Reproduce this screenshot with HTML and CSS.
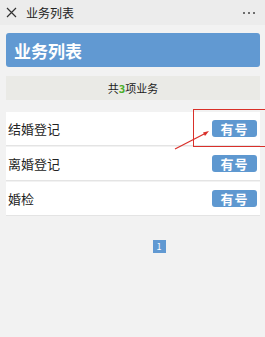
FILE: index.html
```html
<!DOCTYPE html>
<html>
<head>
<meta charset="utf-8">
<link rel="stylesheet" href="styles.css">
</head>
<body>
<div class="topbar">
  <svg class="close" width="11" height="11" viewBox="0 0 11 11"><path d="M1 1 L10 10 M10 1 L1 10" stroke="#333" stroke-width="1.2"/></svg>
  <span class="ttl">业务列表</span>
  <span class="more"><i></i><i></i><i></i></span>
</div>
<div class="main">
  <div class="header">业务列表</div>
  <div class="count">共<span class="num">3</span>项业务</div>
  <div class="list">
    <div class="row"><span>结婚登记</span><span class="btn">有号</span></div>
    <div class="row"><span>离婚登记</span><span class="btn">有号</span></div>
    <div class="row"><span>婚检</span><span class="btn">有号</span></div>
  </div>
  <div class="pager"><span class="page">1</span></div>
</div>
<div class="mark"></div>
<svg class="arrow" width="40" height="30" viewBox="0 0 40 30"><path d="M2 28 L33 12" stroke="#d9302a" stroke-width="1.2" fill="none"/><path d="M36 10 L30 11.5 L32 15 Z" fill="#d9302a"/></svg>
</body>
</html>
```
FILE: styles.css
```css
* { box-sizing: border-box; }
body {
  margin: 0;
  width: 265px;
  height: 337px;
  background: #f2f2f2;
  font-family: "Noto Sans CJK SC", "Noto Sans", sans-serif;
  color: #222;
  position: relative;
  overflow: hidden;
}
.topbar {
  height: 25px;
  background: #ececec;
  display: flex;
  align-items: center;
  padding: 0 10px 0 6px;
  font-size: 12px;
}
.close { margin-right: 9px; }
.ttl { flex: 1; color: #222; }
.more { display: flex; gap: 3px; align-items: center; }
.more i { width: 2px; height: 2px; background: #444; border-radius: 1px; display: block; }
.main { padding: 8px 5px 0 6px; }
.header {
  height: 34px;
  background: #6199d2;
  border-radius: 3px;
  color: #fff;
  font-weight: bold;
  font-size: 17px;
  padding-left: 8px;
  display: flex;
  align-items: center;
}
.count {
  margin-top: 9px;
  height: 24px;
  background: #eaeae6;
  font-size: 11px;
  display: flex;
  align-items: center;
  justify-content: center;
}
.num { color: #4caf2a; font-weight: bold; }
.list { margin-top: 12px; display: flex; flex-direction: column; gap: 1px; }
.row {
  background: #fff;
  height: 34px;
  display: flex;
  align-items: center;
  justify-content: space-between;
  padding: 0 3px 0 2px;
  font-size: 13px;
  border-bottom: 1px solid #e4e4e4;
}
.btn {
  width: 45px;
  height: 17px;
  background: #5e98d0;
  color: #fff;
  font-weight: bold;
  font-size: 13px;
  border-radius: 3px;
  display: flex;
  align-items: center;
  justify-content: center;
  letter-spacing: 1px;
}
.pager { margin-top: 24px; display: flex; justify-content: center; padding-left: 52px; }
.page {
  width: 13px; height: 13px;
  background: #6199d2;
  color: #fff;
  font-size: 9px;
  display: flex; align-items: center; justify-content: center;
}
.mark {
  position: absolute;
  left: 193px; top: 109px;
  width: 75px; height: 38px;
  border: 1.5px solid #d9302a;
}
.arrow { position: absolute; left: 173px; top: 121px; }
```
